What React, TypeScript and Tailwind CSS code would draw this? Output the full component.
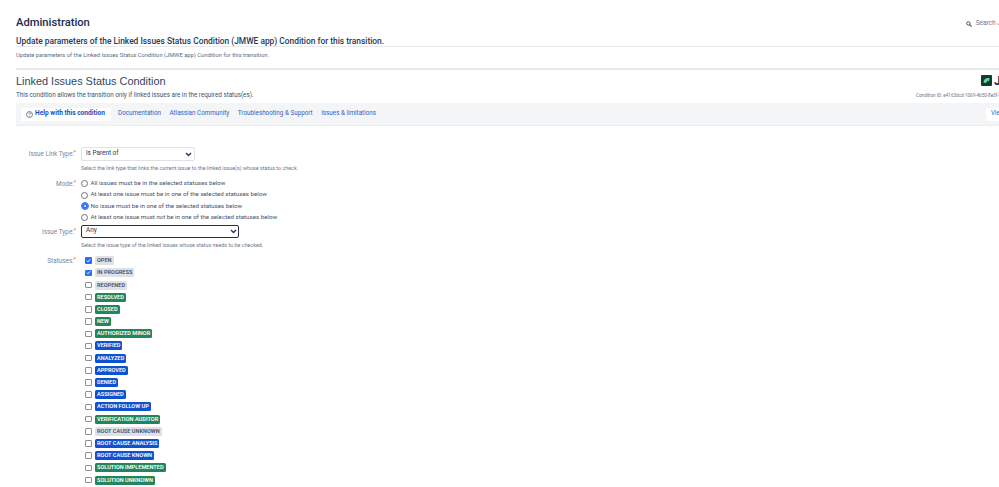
const statuses: [string, "gray" | "green" | "blue", boolean][] = [
  ["OPEN", "gray", true],
  ["IN PROGRESS", "gray", true],
  ["REOPENED", "gray", false],
  ["RESOLVED", "green", false],
  ["CLOSED", "green", false],
  ["NEW", "green", false],
  ["AUTHORIZED MINOR", "green", false],
  ["VERIFIED", "blue", false],
  ["ANALYZED", "blue", false],
  ["APPROVED", "blue", false],
  ["DENIED", "blue", false],
  ["ASSIGNED", "blue", false],
  ["ACTION FOLLOW UP", "blue", false],
  ["VERIFICATION AUDITOR", "green", false],
  ["ROOT CAUSE UNKNOWN", "gray", false],
  ["ROOT CAUSE ANALYSIS", "blue", false],
  ["ROOT CAUSE KNOWN", "blue", false],
  ["SOLUTION IMPLEMENTED", "green", false],
  ["SOLUTION UNKNOWN", "green", false],
];

const lozenge = {
  gray: "bg-[#dfe1e6] text-[#42526e]",
  green: "bg-[#23855a] text-white",
  blue: "bg-[#0f52d0] text-white",
};

function Label({ text }: { text: string }) {
  return (
    <div className="w-[60px] shrink-0 text-right text-[6.4px] leading-[12px] text-[#7a869a] whitespace-nowrap">
      {text}
      <span className="relative -top-[2px] text-[5px] text-[#de350b]">*</span>
    </div>
  );
}

function Chevron() {
  return (
    <svg width="7" height="5" viewBox="0 0 7 5" className="shrink-0">
      <path d="M1 1l2.5 2.5L6 1" fill="none" stroke="#253858" strokeWidth="1.4" />
    </svg>
  );
}

function Radio({ on, children }: { on?: boolean; children: React.ReactNode }) {
  return (
    <div className="flex h-[11.4px] items-center gap-[2.5px]">
      <span
        className={
          on
            ? "ml-[0.5px] mr-[0.5px] h-[6px] w-[6px] rounded-full border-[2px] border-[#2b6ff3] bg-white outline outline-[1px] outline-[#2b6ff3]"
            : "h-[7px] w-[7px] rounded-full border border-[#6b7280] bg-white"
        }
      />
      <span className="text-[6.2px] text-[#42526e] whitespace-nowrap">{children}</span>
    </div>
  );
}

function Check({ on }: { on: boolean }) {
  return on ? (
    <span className="flex h-[6.5px] w-[6.5px] items-center justify-center rounded-[1px] bg-[#2b6ff3]">
      <svg width="5" height="5" viewBox="0 0 6 6">
        <path d="M1 3.2l1.4 1.4L5 1.5" fill="none" stroke="white" strokeWidth="1.1" />
      </svg>
    </span>
  ) : (
    <span className="h-[6.5px] w-[6.5px] rounded-[1px] border border-[#8c8f96] bg-white" />
  );
}

export default function App() {
  return (
    <div className="h-[487px] w-[999px] overflow-hidden bg-white font-['Roboto',sans-serif] text-[#253858]">
      <div className="w-[1060px] pl-4">
        <div className="flex h-[35px] items-center justify-between pr-[52px] pt-[12px]">
          <h1 className="text-[11.2px] font-medium text-[#172b4d]">Administration</h1>
          <div className="flex items-center gap-[4px] text-[6.5px] text-[#6b778c]">
            <svg width="6" height="6" viewBox="0 0 6 6">
              <circle cx="2.4" cy="2.4" r="1.7" fill="none" stroke="#42526e" strokeWidth="1" />
              <path d="M3.6 3.6L5.6 5.6" stroke="#42526e" strokeWidth="1.2" />
            </svg>
            Search Jira
          </div>
        </div>
        <h2 className="text-[8.4px] font-medium leading-[13px] text-[#253858] whitespace-nowrap">
          Update parameters of the Linked Issues Status Condition (JMWE app) Condition for this transition.
        </h2>
        <div className="mt-[-2px] border-t border-[#e8e9ec]" />
        <p className="mt-[4px] text-[5.8px] leading-[9px] text-[#5e6c84] whitespace-nowrap">
          Update parameters of the Linked Issues Status Condition (JMWE app) Condition for this transition.
        </p>
        <div className="mt-[8px] border-t-2 border-[#e8e9ec]" />

        <div className="mt-[4px] flex items-start justify-between">
          <div>
            <div className="font-['Liberation_Sans',sans-serif] text-[10.9px] leading-[14px] text-[#344563] whitespace-nowrap">
              Linked Issues Status Condition
            </div>
            <div className="mt-[3px] text-[6.3px] leading-[9px] text-[#42526e] whitespace-nowrap">
              This condition allows the transition only if linked issues are in the required status(es).
            </div>
          </div>
          <div className="w-[144px]">
            <div className="ml-[65px] flex h-[13px] items-center gap-[2px]">
              <svg width="11" height="11" viewBox="0 0 11 11" className="shrink-0">
                <rect width="11" height="11" rx="1" fill="#123d30" />
                <path d="M2.5 7.5C2.5 4.5 5 2.5 8.5 3L8 6.5 6.5 5.5 5 8z" fill="#6fd6a8" />
              </svg>
              <span className="text-[12px] font-bold leading-none text-[#172b4d]">JMWE</span>
            </div>
            <div className="mt-[5px] text-[4.6px] leading-[7px] text-[#6b778c] whitespace-nowrap">
              Condition ID: e4163dcd-1069-4b50-8e3f-7c2a91d0f6ab
            </div>
          </div>
        </div>

        <div className="mt-[3px] flex h-[23px] items-center justify-between border-b border-[#ebecf0] bg-[#f4f5f7] pl-[5px]">
          <div className="flex items-center text-[6.3px] text-[#2f5fc4]">
            <div className="flex h-[13px] w-[90px] items-center gap-[2px] bg-white pl-[5px] text-[6.6px] font-bold text-[#1d4fb8]">
              <svg width="7" height="7" viewBox="0 0 8 8" className="shrink-0">
                <circle cx="4" cy="4" r="3.4" fill="none" stroke="#42526e" strokeWidth="0.8" />
                <path d="M2.9 3.1c.1-1.3 2.3-1.3 2.3 0 0 .8-1.2.8-1.2 1.6" fill="none" stroke="#42526e" strokeWidth="0.7" />
                <circle cx="4" cy="5.9" r=".45" fill="#42526e" />
              </svg>
              <span className="whitespace-nowrap">Help with this condition</span>
            </div>
            <span className="ml-[7px] whitespace-nowrap">Documentation</span>
            <span className="ml-[8.5px] whitespace-nowrap">Atlassian Community</span>
            <span className="ml-[8.5px] whitespace-nowrap">Troubleshooting &amp; Support</span>
            <span className="ml-[8.5px] whitespace-nowrap">Issues &amp; limitations</span>
          </div>
          <div className="flex h-[13px] w-[74px] items-center bg-white pl-[5px] text-[6.3px] text-[#2f5fc4] whitespace-nowrap">
            View on Marketplace
          </div>
        </div>

        <div className="mt-[21px] flex items-start gap-[5px]">
          <div className="pt-[1px]"><Label text="Issue Link Type:" /></div>
          <div>
            <div className="flex h-[14px] w-[114px] items-center justify-between rounded-[2px] border border-[#dfe1e6] bg-white pl-[4px] pr-[2px] text-[6.4px] text-[#253858]">
              is Parent of
              <Chevron />
            </div>
            <p className="mt-[3px] text-[5.4px] leading-[8px] text-[#6b778c] whitespace-nowrap">
              Select the link type that links the current issue to the linked issue(s) whose status to check.
            </p>
          </div>
        </div>

        <div className="mt-[6px] flex items-start gap-[5px]">
          <Label text="Mode:" />
          <div>
            <Radio>All issues must be in the selected statuses below</Radio>
            <Radio>At least one issue must be in one of the selected statuses below</Radio>
            <Radio on>No issue must be in one of the selected statuses below</Radio>
            <Radio>At least one issue must <em>not</em> be in one of the selected statuses below</Radio>
          </div>
        </div>

        <div className="mt-[1px] flex items-start gap-[5px]">
          <div className="pt-[1px]"><Label text="Issue Type:" /></div>
          <div>
            <div className="flex h-[13px] w-[158px] items-center justify-between rounded-[2px] border border-[#2b2f36] bg-white pl-[4px] pr-[1px] text-[6.4px] text-[#253858]">
              Any
              <Chevron />
            </div>
            <p className="mt-[3px] text-[5.4px] leading-[8px] text-[#6b778c] whitespace-nowrap">
              Select the issue type of the linked issues whose status needs to be checked.
            </p>
          </div>
        </div>

        <div className="mt-[6px] flex items-start gap-[5px]">
          <Label text="Statuses:" />
          <div className="pl-[4px]">
            {statuses.map(([name, color, on]) => (
              <div key={name} className="flex h-[12.2px] items-center gap-[3.5px]">
                <Check on={on} />
                <span className={`rounded-[1.5px] px-[2px] text-[5.6px] font-semibold leading-[9px] whitespace-nowrap ${lozenge[color]}`}>
                  {name}
                </span>
              </div>
            ))}
          </div>
        </div>
      </div>
    </div>
  );
}
